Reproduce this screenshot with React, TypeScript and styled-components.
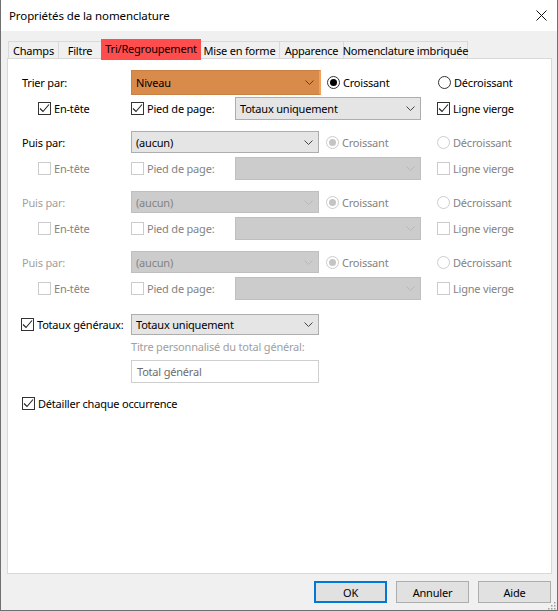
import React from "react";
import styled, { createGlobalStyle, css } from "styled-components";

const GlobalStyle = createGlobalStyle`
	html, body { margin: 0; padding: 0; background: #ffffff; }
	body {
		font-family: "Noto Sans", "Open Sans", sans-serif;
		font-size: 11px;
		letter-spacing: -0.2px;
		color: #000;
	}
	* { box-sizing: border-box; }
`;

const Window = styled.div`
	display: flex;
	flex-direction: column;
	width: 558px;
	height: 611px;
	border: 1px solid #707070;
	border-top: none;
	background: #f0f0f0;
`;

const TitleBar = styled.div`
	display: flex;
	align-items: center;
	justify-content: space-between;
	height: 31px;
	padding: 0 6px 0 8px;
	background: #ffffff;
	font-size: 11.5px;
	letter-spacing: -0.1px;
`;

const CloseButton = styled.div`
	display: flex;
	align-items: center;
	justify-content: center;
	width: 20px;
	height: 20px;
`;

const Body = styled.div`
	display: flex;
	flex: 1;
	flex-direction: column;
	padding: 8px 5px 0 6px;
`;

const TabStrip = styled.div`
	display: flex;
	align-items: flex-end;
	height: 19px;
	padding-left: 1px;
`;

const Tab = styled.div<{ $w: number; $active?: boolean }>`
	display: flex;
	align-items: center;
	justify-content: center;
	width: ${(p) => p.$w}px;
	height: 17px;
	border: 1px solid #d9d9d9;
	border-bottom: none;
	margin-right: -1px;
	background: #f0f0f0;
	white-space: nowrap;
	${(p) =>
		p.$active &&
		css`
			position: relative;
			z-index: 1;
			height: 21px;
			margin: 0 -2px -2px 0;
			padding-bottom: 3px;
			background: #ff4d4d;
			border-color: #ff4d4d;
		`}
`;

const Panel = styled.div`
	display: flex;
	flex: 1;
	flex-direction: column;
	padding: 10px 0 0 14px;
	border: 1px solid #d9d9d9;
	background: #ffffff;
`;

const Group = styled.div`
	display: flex;
	flex-direction: column;
	margin-bottom: 8px;
`;

const Row = styled.div<{ $indent?: number; $h?: number; $mt?: number }>`
	display: flex;
	align-items: center;
	height: ${(p) => p.$h ?? 26}px;
	margin-top: ${(p) => p.$mt ?? 0}px;
	padding-left: ${(p) => p.$indent ?? 0}px;
`;

const Label = styled.div<{ $w?: number; $disabled?: boolean }>`
	width: ${(p) => (p.$w ? `${p.$w}px` : "auto")};
	color: ${(p) => (p.$disabled ? "#a0a0a0" : "#000")};
	white-space: nowrap;
`;

const Hint = styled.div`
	margin-left: 109px;
	height: 20px;
	line-height: 20px;
	color: #a0a0a0;
`;

const Combo = styled.div<{ $w: number; $h?: number; $disabled?: boolean; $hl?: boolean }>`
	display: flex;
	align-items: center;
	justify-content: space-between;
	width: ${(p) => p.$w}px;
	height: ${(p) => p.$h ?? 21}px;
	padding: 0 5px 0 4px;
	border: 1px solid ${(p) => (p.$disabled ? "#bfbfbf" : "#adadad")};
	background: ${(p) => (p.$disabled ? "#cccccc" : "#e5e5e5")};
	color: ${(p) => (p.$disabled ? "#838383" : "#000")};
	white-space: nowrap;
	${(p) =>
		p.$hl &&
		css`
			background: #d98b4b;
			border-color: #c98043;
			border-right: 2px solid #f0a25e;
		`}
`;

const TextBox = styled.div`
	display: flex;
	align-items: center;
	width: 188px;
	height: 23px;
	margin-left: 109px;
	padding-left: 5px;
	border: 1px solid #cfcfcf;
	background: #ffffff;
	color: #6d6d6d;
`;

const Choice = styled.label<{ $w?: number; $ml?: number }>`
	display: flex;
	align-items: center;
	gap: 3px;
	width: ${(p) => (p.$w ? `${p.$w}px` : "auto")};
	margin-left: ${(p) => p.$ml ?? 0}px;
	white-space: nowrap;
`;

const Box = styled.span<{ $disabled?: boolean }>`
	display: flex;
	align-items: center;
	justify-content: center;
	flex: none;
	width: 13px;
	height: 13px;
	border: 1px solid ${(p) => (p.$disabled ? "#cccccc" : "#333333")};
	background: #ffffff;
`;

const Circle = styled(Box)`
	border-radius: 50%;
`;

const Dot = styled.span<{ $disabled?: boolean }>`
	width: 7px;
	height: 7px;
	border-radius: 50%;
	background: ${(p) => (p.$disabled ? "#c4c4c4" : "#000")};
`;

const ChoiceText = styled.span<{ $disabled?: boolean }>`
	color: ${(p) => (p.$disabled ? "#838383" : "#000")};
`;

const Footer = styled.div`
	display: flex;
	justify-content: flex-end;
	gap: 9px;
	height: 36px;
	padding: 7px 1px 0 0;
	position: relative;
`;

const Button = styled.div<{ $primary?: boolean }>`
	display: flex;
	align-items: center;
	justify-content: center;
	width: 73px;
	height: 22px;
	border: 1px solid #adadad;
	background: #e1e1e1;
	${(p) =>
		p.$primary &&
		css`
			border: 2px solid #0078d7;
		`}
`;

const Grip = styled.svg`
	position: absolute;
	right: -4px;
	bottom: 0;
`;

const Chevron = ({ disabled }: { disabled?: boolean }) => (
	<svg width="9" height="5" viewBox="0 0 9 5">
		<path d="M0.5 0.5 L4.5 4.5 L8.5 0.5" fill="none" stroke={disabled ? "#b8b8b8" : "#444"} strokeWidth="1" />
	</svg>
);

const Check = ({ label, checked, disabled, w, ml }: { label: string; checked?: boolean; disabled?: boolean; w?: number; ml?: number }) => (
	<Choice $w={w} $ml={ml}>
		<Box $disabled={disabled}>
			{checked && (
				<svg width="11" height="11" viewBox="0 0 11 11">
					<path d="M1 5.5 L4 8.5 L10 1.5" fill="none" stroke="#222" strokeWidth="1.1" />
				</svg>
			)}
		</Box>
		<ChoiceText $disabled={disabled}>{label}</ChoiceText>
	</Choice>
);

const Radio = ({ label, selected, disabled, w, ml }: { label: string; selected?: boolean; disabled?: boolean; w?: number; ml?: number }) => (
	<Choice $w={w} $ml={ml}>
		<Circle $disabled={disabled}>{selected && <Dot $disabled={disabled} />}</Circle>
		<ChoiceText $disabled={disabled}>{label}</ChoiceText>
	</Choice>
);

type SortGroup = {
	label: string;
	value: string;
	first?: boolean;
	enabled: boolean;
	optionsEnabled: boolean;
};

const groups: SortGroup[] = [
	{ label: "Trier par:", value: "Niveau", first: true, enabled: true, optionsEnabled: true },
	{ label: "Puis par:", value: "(aucun)", enabled: true, optionsEnabled: false },
	{ label: "Puis par:", value: "(aucun)", enabled: false, optionsEnabled: false },
	{ label: "Puis par:", value: "(aucun)", enabled: false, optionsEnabled: false },
];

const tabs = [
	{ name: "Champs", w: 51 },
	{ name: "Filtre", w: 44 },
	{ name: "Tri/Regroupement", w: 100, active: true },
	{ name: "Mise en forme", w: 81 },
	{ name: "Apparence", w: 65 },
	{ name: "Nomenclature imbriquée", w: 125 },
];

const App: React.FC = () => {
	return (
		<>
			<GlobalStyle />
			<Window>
				<TitleBar>
					<span>Propriétés de la nomenclature</span>
					<CloseButton>
						<svg width="11" height="11" viewBox="0 0 11 11">
							<path d="M0.5 0.5 L10.5 10.5 M10.5 0.5 L0.5 10.5" stroke="#111" strokeWidth="1" />
						</svg>
					</CloseButton>
				</TitleBar>

				<Body>
					<TabStrip>
						{tabs.map((t) => (
							<Tab key={t.name} $w={t.w} $active={t.active}>
								{t.name}
							</Tab>
						))}
					</TabStrip>

					<Panel>
						{groups.map((g, i) => {
							const optionsOff = !g.optionsEnabled;
							return (
								<Group key={i}>
									<Row>
										<Label $w={109} $disabled={!g.enabled}>
											{g.label}
										</Label>
										<Combo
											$w={g.first ? 190 : 188}
											$h={g.first ? 25 : 22}
											$hl={g.first}
											$disabled={!g.enabled}
										>
											<span>{g.value}</span>
											<Chevron disabled={!g.enabled} />
										</Combo>
										<Radio label="Croissant" selected disabled={optionsOff} w={111} ml={g.first ? 6 : 7} />
										<Radio label="Décroissant" disabled={optionsOff} />
									</Row>
									<Row $indent={16}>
										<Check label="En-tête" checked={g.first} disabled={optionsOff} w={93} />
										<Check label="Pied de page:" checked={g.first} disabled={optionsOff} w={104} />
										<Combo $w={186} $h={23} $disabled={optionsOff}>
											<span>{g.first ? "Totaux uniquement" : ""}</span>
											<Chevron disabled={optionsOff} />
										</Combo>
										<Check label="Ligne vierge" checked={g.first} disabled={optionsOff} ml={16} />
									</Row>
								</Group>
							);
						})}

						<Row $mt={2}>
							<Check label="Totaux généraux:" checked w={110} ml={-1} />
							<Combo $w={188} $h={21}>
								<span>Totaux uniquement</span>
								<Chevron />
							</Combo>
						</Row>
						<Hint>Titre personnalisé du total général:</Hint>
						<Row $h={28}>
							<TextBox>Total général</TextBox>
						</Row>
						<Row $mt={5}>
							<Check label="Détailler chaque occurrence" checked />
						</Row>
					</Panel>

					<Footer>
						<Button $primary>OK</Button>
						<Button>Annuler</Button>
						<Button>Aide</Button>
						<Grip width="10" height="10" viewBox="0 0 10 10">
							{[
								[8, 2],
								[8, 5],
								[5, 5],
								[8, 8],
								[5, 8],
								[2, 8],
							].map(([x, y]) => (
								<rect key={`${x}-${y}`} x={x} y={y} width="1.5" height="1.5" fill="#a0a0a0" />
							))}
						</Grip>
					</Footer>
				</Body>
			</Window>
		</>
	);
};

export default App;
